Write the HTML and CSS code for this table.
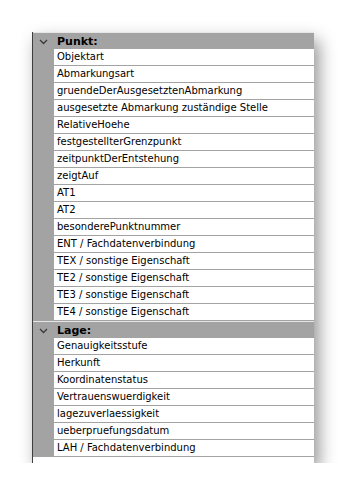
FILE: index.html
```html
<!DOCTYPE html>
<html lang="de">
<head>
    <meta charset="UTF-8">
    <title>Attribute</title>
    <link rel="stylesheet" href="styles.css">
</head>
<body>
    <div class="attr-panel">
        <!-- Punkt -->
        <div class="group">
            <div class="group-header">
                <span class="toggle">
                    <svg width="9" height="6" viewBox="0 0 9 6"><polyline points="1,1 4.5,4.5 8,1" fill="none" stroke="#3a3a3a" stroke-width="1.3"/></svg>
                </span>
                <span class="group-title">Punkt:</span>
            </div>
            <div class="row"><span class="cell">Objektart</span></div>
            <div class="row"><span class="cell">Abmarkungsart</span></div>
            <div class="row"><span class="cell">gruendeDerAusgesetztenAbmarkung</span></div>
            <div class="row"><span class="cell">ausgesetzte Abmarkung zuständige Stelle</span></div>
            <div class="row"><span class="cell">RelativeHoehe</span></div>
            <div class="row"><span class="cell">festgestellterGrenzpunkt</span></div>
            <div class="row"><span class="cell">zeitpunktDerEntstehung</span></div>
            <div class="row"><span class="cell">zeigtAuf</span></div>
            <div class="row"><span class="cell">AT1</span></div>
            <div class="row"><span class="cell">AT2</span></div>
            <div class="row"><span class="cell">besonderePunktnummer</span></div>
            <div class="row"><span class="cell">ENT / Fachdatenverbindung</span></div>
            <div class="row"><span class="cell">TEX / sonstige Eigenschaft</span></div>
            <div class="row"><span class="cell">TE2 / sonstige Eigenschaft</span></div>
            <div class="row"><span class="cell">TE3 / sonstige Eigenschaft</span></div>
            <div class="row"><span class="cell">TE4 / sonstige Eigenschaft</span></div>
        </div>

        <!-- Lage -->
        <div class="group">
            <div class="group-header">
                <span class="toggle">
                    <svg width="9" height="6" viewBox="0 0 9 6"><polyline points="1,1 4.5,4.5 8,1" fill="none" stroke="#3a3a3a" stroke-width="1.3"/></svg>
                </span>
                <span class="group-title">Lage:</span>
            </div>
            <div class="row"><span class="cell">Genauigkeitsstufe</span></div>
            <div class="row"><span class="cell">Herkunft</span></div>
            <div class="row"><span class="cell">Koordinatenstatus</span></div>
            <div class="row"><span class="cell">Vertrauenswuerdigkeit</span></div>
            <div class="row"><span class="cell">lagezuverlaessigkeit</span></div>
            <div class="row"><span class="cell">ueberpruefungsdatum</span></div>
            <div class="row"><span class="cell">LAH / Fachdatenverbindung</span></div>
        </div>
    </div>
</body>
</html>
```

FILE: styles.css
```css
/* Page */
body {
    margin: 0;
    padding: 32px 0 0 32px;
    background-color: #fff;
    font-family: "DejaVu Sans", Tahoma, sans-serif;
    font-size: 10px;
    color: #000;
}

/* Property grid panel */
.attr-panel {
    width: 281px;
    background-color: #fff;
    border-left: 1px solid #3f3f3f;
    padding-bottom: 6px;
    box-shadow: 5px 8px 16px rgba(0, 0, 0, 0.42);
}

.group-header {
    display: flex;
    align-items: center;
    height: 17px;
    background-color: #a3a3a3;
    border-top: 1px solid #e6e6e6;
    box-sizing: border-box;
}

.toggle {
    width: 21px;
    display: flex;
    justify-content: center;
    padding-top: 1px;
}

.group-title {
    padding-left: 3px;
    font-weight: bold;
    font-size: 11px;
}

.row {
    display: flex;
    height: 17px;
    background-color: #a3a3a3;
}

.cell {
    flex: 1;
    margin-left: 21px;
    padding-left: 3px;
    background-color: #fff;
    border-bottom: 1px solid #a3a3a3;
    line-height: 16px;
    white-space: nowrap;
    overflow: hidden;
}
```
